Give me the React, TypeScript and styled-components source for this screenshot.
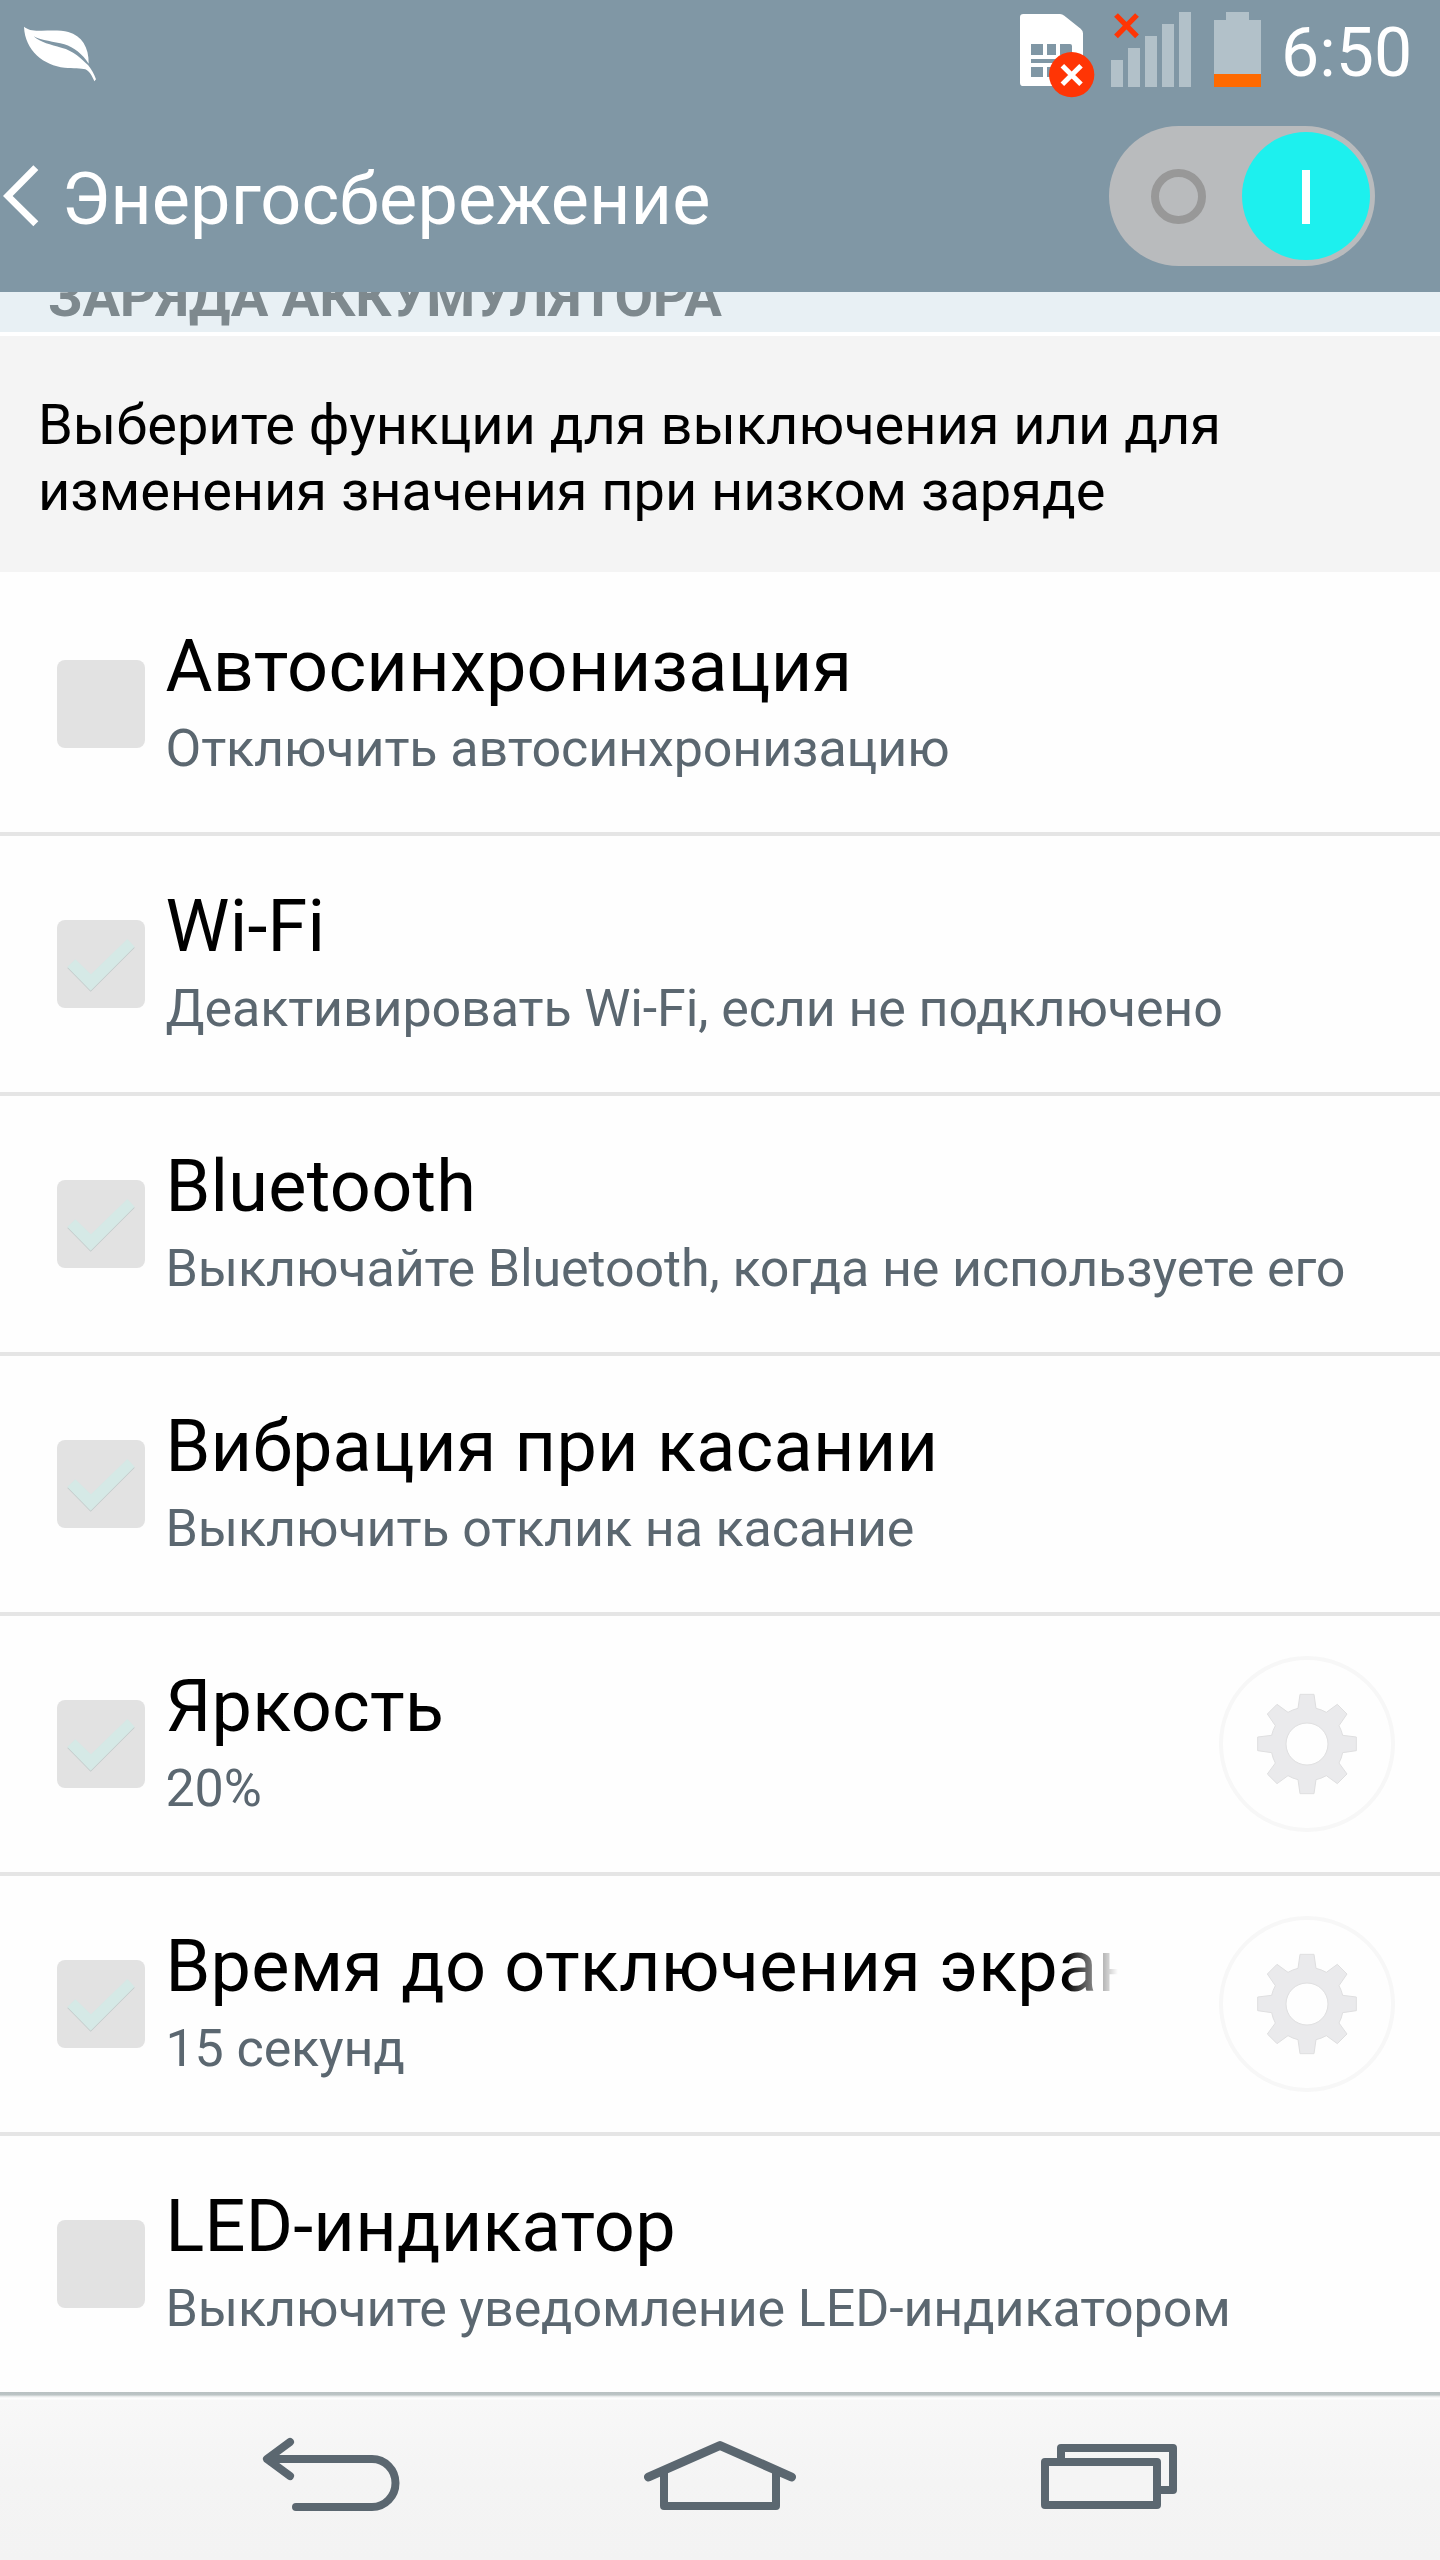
import React from "react";
import styled, { createGlobalStyle } from "styled-components";

const GlobalStyle = createGlobalStyle`
  * { box-sizing: border-box; }
  body { margin: 0; background: #fefefe; }
`;

const Screen = styled.div`
  display: flex;
  flex-direction: column;
  width: 1440px;
  height: 2560px;
  overflow: hidden;
  background: #fefefe;
  color: #000;
  font-family: Roboto, "Noto Sans", sans-serif;
`;

const Header = styled.header`
  flex: none;
  height: 292px;
  background: #8097a5;
  color: #fff;
`;

const StatusBar = styled.div`
  display: flex;
  height: 100px;
  padding-left: 24px;
`;

const StatusIcons = styled.div`
  display: flex;
  margin-left: auto;
`;

const StatusIcon = styled.svg<{ $gap?: number }>`
  flex: none;
  height: 100px;
  margin-right: ${(p) => p.$gap ?? 0}px;
`;

const Clock = styled.time`
  width: 159px;
  padding-top: 12px;
  font-size: 68px;
  line-height: 82px;
  white-space: nowrap;
`;

const TitleBar = styled.div`
  display: flex;
  align-items: center;
  height: 192px;
  padding: 0 65px 0 3px;
`;

const BackChevron = styled.svg`
  flex: none;
  width: 36px;
  height: 62px;
`;

const Title = styled.h1`
  flex: 1;
  margin: 0;
  padding: 8px 0 0 22.6px;
  font-size: 72px;
  font-weight: 400;
  letter-spacing: 0.09px;
  line-height: 84px;
  white-space: nowrap;
`;

const Toggle = styled.div`
  display: flex;
  align-items: center;
  justify-content: space-between;
  width: 266px;
  height: 140px;
  padding: 0 5px 0 42px;
  border-radius: 70px;
  background: #b9bbbd;
`;

const OffMark = styled.span`
  width: 55px;
  height: 55px;
  border: 8px solid #989898;
  border-radius: 50%;
`;

const Knob = styled.span`
  display: flex;
  align-items: center;
  justify-content: center;
  width: 128px;
  height: 128px;
  border-radius: 50%;
  background: #1df0ee;

  &::before {
    content: "";
    width: 8px;
    height: 54px;
    margin-right: 1px;
    margin-top: 2px;
    background: #fff;
  }
`;

const SectionHeader = styled.div`
  flex: none;
  display: flex;
  align-items: flex-end;
  height: 44px;
  padding: 0 48px 2px;
  overflow: hidden;
  border-bottom: 4px solid #fff;
  background: #e8f0f4;
  color: #7e898e;
  font-size: 56px;
  font-weight: 700;
  letter-spacing: -0.2px;
  line-height: 66px;
  white-space: nowrap;
`;

const Intro = styled.p`
  flex: none;
  height: 240px;
  margin: 0;
  padding: 56px 38px 0;
  border-bottom: 4px solid #fefefe;
  background: #f4f4f4;
  font-size: 56px;
  letter-spacing: -0.03px;
  line-height: 66px;
  white-space: pre-line;
`;

const List = styled.ul`
  flex: none;
  margin: 0;
  padding: 0;
  list-style: none;
`;

const Row = styled.li`
  display: flex;
  align-items: center;
  height: 260px;
  padding: 0 45px 0 57px;
  border-bottom: 4px solid #e5e5e5;

  &:last-child {
    height: 256px;
    border-bottom: 0;
  }
`;

const Checkbox = styled.span`
  flex: none;
  width: 88px;
  height: 88px;
  border-radius: 8px;
  background: #e2e2e2;
`;

const CheckMark = styled.svg`
  display: block;
  width: 88px;
  height: 88px;
`;

const RowText = styled.div`
  flex: 1;
  min-width: 0;
  align-self: flex-start;
  padding: 49px 0 0 20.5px;
`;

const RowTitle = styled.div<{ $faded?: boolean }>`
  width: ${(p) => (p.$faded ? "952px" : "auto")};
  overflow: hidden;
  font-size: 72px;
  letter-spacing: 0.25px;
  line-height: 84px;
  white-space: nowrap;
  ${(p) =>
    p.$faded &&
    "mask-image: linear-gradient(to right, #000 900px, transparent 952px);"}
`;

const RowSummary = styled.div`
  margin-top: 9px;
  color: #5b6770;
  font-size: 52px;
  letter-spacing: -0.11px;
  line-height: 62px;
  white-space: nowrap;
`;

const SettingsButton = styled.span`
  flex: none;
  width: 176px;
  height: 176px;
  border: 4px solid #f7f7f7;
  border-radius: 50%;
`;

const Gear = styled.svg`
  display: block;
  width: 168px;
  height: 168px;
`;

const NavBar = styled.nav`
  flex: none;
  display: flex;
  height: 168px;
  padding-left: 260px;
  background: linear-gradient(
    #b9c1c2 0,
    #bcc4c5 3px,
    #e3e6e6 4px,
    #fdfdfd 6px,
    #fdfdfd 7px,
    #f8f8f8 8px,
    #f4f4f4 90px,
    #f3f3f3 168px
  );
`;

const NavIcon = styled.svg<{ $gap?: number }>`
  flex: none;
  width: 160px;
  height: 168px;
  margin-right: ${(p) => p.$gap ?? 0}px;
  fill: none;
  stroke: #5b6770;
  stroke-width: 8;
  stroke-linecap: round;
  stroke-linejoin: round;
`;

const rows = [
  { title: "Автосинхронизация", summary: "Отключить автосинхронизацию" },
  { title: "Wi-Fi", summary: "Деактивировать Wi-Fi, если не подключено", checked: true },
  { title: "Bluetooth", summary: "Выключайте Bluetooth, когда не используете его", checked: true },
  { title: "Вибрация при касании", summary: "Выключить отклик на касание", checked: true },
  { title: "Яркость", summary: "20%", checked: true, settings: true },
  { title: "Время до отключения экрана", summary: "15 секунд", checked: true, settings: true, faded: true },
  { title: "LED-индикатор", summary: "Выключите уведомление LED-индикатором" },
];

const signalBars = [180, 144, 108, 72, 36];

function GearIcon() {
  return (
    <Gear viewBox="-252 -252 504 504">
      <path
        fill="#eaeaec"
        stroke="#dfdfe0"
        strokeWidth="3"
        fillRule="evenodd"
        d="M-21-149H21L27-107A110 110 0 0 1 58-95L91-119L120-90L96-55A110 110 0 0 1 107-26L148-21V20L107 26A110 110 0 0 1 96 57L120 90L91 119L58 95A110 110 0 0 1 27 107L21 149H-21L-27 107A110 110 0 0 1-57 95L-90 119L-119 90L-95 57A110 110 0 0 1-106 26L-148 20V-21L-106-26A110 110 0 0 1-95-55L-119-90L-90-119L-57-95A110 110 0 0 1-27-107ZM63 0A63 63 0 1 0-63 0A63 63 0 1 0 63 0Z"
      />
    </Gear>
  );
}

export default function App() {
  return (
    <Screen>
      <GlobalStyle />
      <Header>
        <StatusBar>
          <StatusIcon viewBox="72 0 219 300" width={73}>
            <path
              fill="#fff"
              d="M72 80C84 90 100 93 125 92C155 91 185 90 205 96C245 107 267 142 266 191C248 163 222 142 193 133C162 125 125 122 101 109C122 128 152 134 184 143C222 152 244 177 264 195C274 207 283 223 288 238L283 244C277 229 267 212 256 208C244 204 220 206 194 203C132 196 75 153 72 80Z"
            />
          </StatusIcon>
          <StatusIcons>
            <StatusIcon viewBox="60 0 225 300" width={75} $gap={15}>
              <path fill="#fff" d="M70 42H180Q187 42 193 47L242 86Q249 92 249 100V248Q249 258 239 258H70Q60 258 60 248V52Q60 42 70 42Z" />
              <path fill="#8097a5" d="M93 132H129V165H93ZM141 132H168V165H141ZM180 132H210Q216 132 216 138V165H180ZM93 177H216V189H93ZM93 201H129V231H93ZM141 201H168V231H141Z" />
              <circle cx="215" cy="224" r="68" fill="#ff3505" />
              <path stroke="#fff" strokeWidth="15" d="M187 197L243 253M243 197L187 253" />
            </StatusIcon>
            <StatusIcon viewBox="330 0 246 300" width={82} $gap={22}>
              {signalBars.map((top, i) => (
                <rect key={top} x={333 + i * 51} y={top} width="36" height={261 - top} fill="#b2c1c9" />
              ))}
              <path stroke="#ff3505" strokeWidth="16" d="M348 45L411 109M411 45L348 109" />
            </StatusIcon>
            <StatusIcon viewBox="642 0 141 300" width={47} $gap={20}>
              <path fill="#b2c1c9" d="M642 60H678V36H747V60H783V222H642Z" />
              <path fill="#ff6a00" d="M642 222H783V261H642Z" />
            </StatusIcon>
            <Clock>6:50</Clock>
          </StatusIcons>
        </StatusBar>
        <TitleBar>
          <BackChevron viewBox="9 497 108 186">
            <path fill="#fff" d="M100 498L115 512L38 590L115 666L100 681L9 590Z" />
          </BackChevron>
          <Title>Энергосбережение</Title>
          <Toggle>
            <OffMark />
            <Knob />
          </Toggle>
        </TitleBar>
      </Header>
      <SectionHeader>ЗАРЯДА АККУМУЛЯТОРА</SectionHeader>
      <Intro>{"Выберите функции для выключения или для\nизменения значения при низком заряде"}</Intro>
      <List>
        {rows.map((row) => (
          <Row key={row.title}>
            <Checkbox>
              {row.checked && (
                <CheckMark viewBox="0 0 264 264">
                  <path fill="#c3caca" d="M31 144L55 121L102 166L211 60L233 83L101 215Z" />
                  <path fill="#d5e9e6" d="M31 141L55 118L102 163L211 57L233 80L101 212Z" />
                </CheckMark>
              )}
            </Checkbox>
            <RowText>
              <RowTitle $faded={row.faded}>{row.title}</RowTitle>
              <RowSummary>{row.summary}</RowSummary>
            </RowText>
            {row.settings && (
              <SettingsButton>
                <GearIcon />
              </SettingsButton>
            )}
          </Row>
        ))}
      </List>
      <NavBar>
        <NavIcon viewBox="260 2392 160 168" $gap={220}>
          <path d="M290 2442L267 2459L290 2476M268 2459H372A23.5 24 0 0 1 372 2507H296" />
        </NavIcon>
        <NavIcon viewBox="640 2392 160 168" $gap={240}>
          <path strokeWidth="9" d="M648.5 2477L720 2445.5L791.5 2477" />
          <path d="M664 2472V2506H776V2472" />
        </NavIcon>
        <NavIcon viewBox="1040 2392 160 168">
          <rect x="1061" y="2448" width="112" height="42" />
          <rect x="1045" y="2462" width="112" height="43" fill="#f4f4f4" />
        </NavIcon>
      </NavBar>
    </Screen>
  );
}
